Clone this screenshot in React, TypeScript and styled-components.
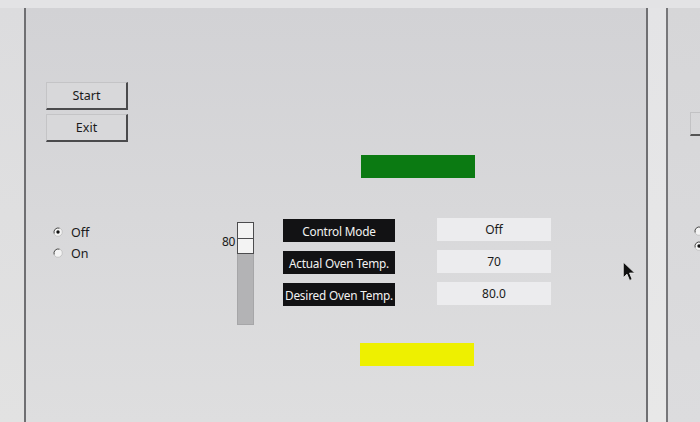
import styled, { createGlobalStyle } from "styled-components";

const Global = createGlobalStyle`
  html, body {
    margin: 0;
    padding: 0;
    width: 700px;
    height: 422px;
    overflow: hidden;
    background: #dedee0;
  }
  * {
    box-sizing: border-box;
  }
`;

function App() {
  return (
    <>
      <Global />
      <Screen>
        <LeftStrip />
        <MainPanel>
          <ButtonStack>
            <FormButton>Start</FormButton>
            <FormButton>Exit</FormButton>
          </ButtonStack>
          <StatusBar color="#0b7a12" offset={335} top={13} />
          <ControlsRow>
            <RadioGroup>
              <RadioRow>
                <Radio checked />
                <span>Off</span>
              </RadioRow>
              <RadioRow>
                <Radio />
                <span>On</span>
              </RadioRow>
            </RadioGroup>
            <SliderGroup>
              <SliderValue>80</SliderValue>
              <Track>
                <Thumb />
              </Track>
            </SliderGroup>
            <LabelColumn>
              <Tag>Control Mode</Tag>
              <Tag>Actual Oven Temp.</Tag>
              <Tag>Desired Oven Temp.</Tag>
            </LabelColumn>
            <ValueColumn>
              <ValueBox>Off</ValueBox>
              <ValueBox>70</ValueBox>
              <ValueBox>80.0</ValueBox>
            </ValueColumn>
          </ControlsRow>
          <StatusBar color="#eef000" offset={334} top={18} />
          <Cursor viewBox="0 0 12 20" width="13" height="21">
            <path
              d="M1 1 L1 16 L4.5 12.5 L7 18.5 L9.5 17.5 L7 11.5 L12 11.5 Z"
              fill="#111"
              stroke="#eee"
              strokeWidth="0.8"
            />
          </Cursor>
        </MainPanel>
        <Gutter />
        <SidePanel>
          <PartialButton />
          <SideRadios>
            <Radio />
            <Radio checked />
          </SideRadios>
        </SidePanel>
      </Screen>
    </>
  );
}

export default App;

const Screen = styled.div`
  display: flex;
  width: 700px;
  height: 422px;
  padding-top: 8px;
  background: #e3e3e5;
  font-family: "Noto Sans", "Open Sans", sans-serif;
  font-size: 12px;
  color: #1a1a1a;
`;

const LeftStrip = styled.div`
  width: 24px;
  background: linear-gradient(#dcdcde, #e2e2e2);
`;

const MainPanel = styled.div`
  position: relative;
  width: 624px;
  display: flex;
  flex-direction: column;
  border-left: 2px solid #6f6f72;
  border-right: 2px solid #6f6f72;
  background: linear-gradient(#d2d2d5, #d8d8da 50%, #dededf);
`;

const ButtonStack = styled.div`
  display: flex;
  flex-direction: column;
  gap: 4px;
  margin: 74px 0 0 20px;
`;

const FormButton = styled.div`
  width: 82px;
  height: 28px;
  display: flex;
  align-items: center;
  justify-content: center;
  background: #d8d8da;
  border-top: 1px solid #c4c4c6;
  border-left: 1px solid #c4c4c6;
  border-right: 2px solid #4a4a4c;
  border-bottom: 2px solid #4a4a4c;
  font-size: 12.5px;
`;

const StatusBar = styled.div<{ color: string; offset: number; top: number }>`
  width: 114px;
  height: 23px;
  margin: ${(p) => p.top}px 0 0 ${(p) => p.offset}px;
  background: ${(p) => p.color};
`;

const ControlsRow = styled.div`
  display: flex;
  align-items: flex-start;
  margin-top: 40px;
`;

const RadioGroup = styled.div`
  display: flex;
  flex-direction: column;
  gap: 7px;
  margin: 7px 0 0 27px;
  width: 169px;
`;

const RadioRow = styled.div`
  display: flex;
  align-items: center;
  gap: 8px;
  height: 14px;
  font-size: 12.5px;
`;

function Radio({ checked }: { checked?: boolean }) {
  return (
    <RadioSvg viewBox="0 0 10 10" width="10" height="10">
      <circle cx="5" cy="5" r="4.3" fill="#f4f4f4" stroke="#bdbdbd" strokeWidth="0.8" />
      <path d="M1.2 6.5 A4.2 4.2 0 0 1 6.5 1.2" fill="none" stroke="#555" strokeWidth="1" />
      {checked && <circle cx="5" cy="5" r="1.7" fill="#111" />}
    </RadioSvg>
  );
}

const RadioSvg = styled.svg`
  flex: none;
  display: block;
`;

const SliderGroup = styled.div`
  display: flex;
  align-items: flex-start;
  margin-top: 4px;
  width: 61px;
`;

const SliderValue = styled.span`
  margin-top: 11px;
  width: 15px;
  font-size: 12px;
  letter-spacing: -0.4px;
`;

const Track = styled.div`
  width: 17px;
  height: 103px;
  background: #b3b3b5;
  border: 1px solid #a6a6a8;
`;

const Thumb = styled.div`
  width: 17px;
  height: 32px;
  margin-left: -1px;
  margin-top: -1px;
  background: #f3f3f3;
  border: 1px solid #4c4c4e;
  display: flex;
  align-items: center;

  &::after {
    content: "";
    display: block;
    width: 100%;
    height: 1px;
    background: #4c4c4e;
  }
`;

const LabelColumn = styled.div`
  display: flex;
  flex-direction: column;
  gap: 9px;
  margin-top: 1px;
  width: 154px;
`;

const Tag = styled.div`
  width: 112px;
  height: 23px;
  display: flex;
  align-items: center;
  justify-content: center;
  background: #121214;
  color: #f2f2f2;
  font-size: 11.8px;
  letter-spacing: -0.2px;
  white-space: nowrap;
`;

const ValueColumn = styled.div`
  display: flex;
  flex-direction: column;
  gap: 9px;
`;

const ValueBox = styled.div`
  width: 114px;
  height: 23px;
  display: flex;
  align-items: center;
  justify-content: center;
  background: #ececee;
  font-size: 12px;
`;

const Cursor = styled.svg`
  position: absolute;
  left: 596px;
  top: 253px;
`;

const Gutter = styled.div`
  width: 18px;
  background: linear-gradient(#e4e4e6, #e8e8e8);
`;

const SidePanel = styled.div`
  flex: 1;
  display: flex;
  flex-direction: column;
  overflow: hidden;
  border-left: 2px solid #77777a;
  background: linear-gradient(#d6d6d8, #dcdcde);
`;

const PartialButton = styled.div`
  margin: 104px 0 0 22px;
  height: 24px;
  border-left: 1px solid #c2c2c4;
  border-top: 1px solid #c2c2c4;
  border-bottom: 2px solid #555;
`;

const SideRadios = styled.div`
  display: flex;
  flex-direction: column;
  gap: 5px;
  margin: 90px 0 0 26px;
`;
